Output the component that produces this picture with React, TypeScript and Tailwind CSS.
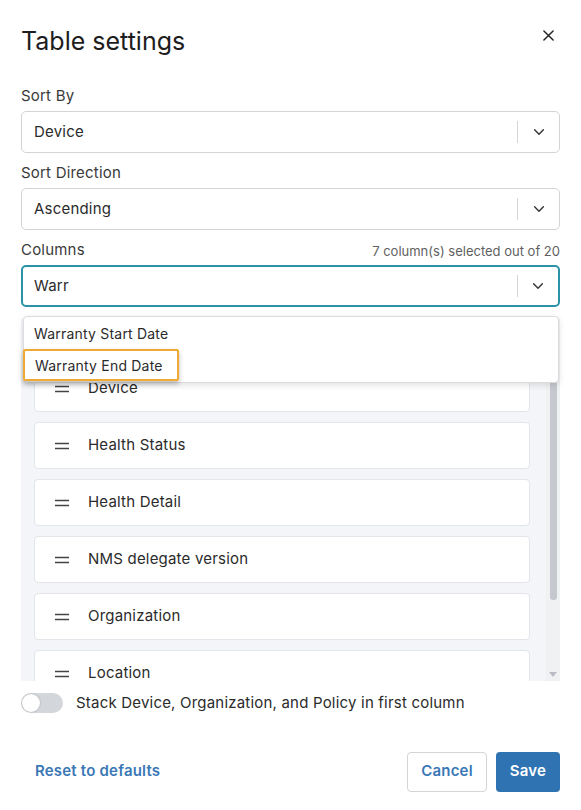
import { useState } from "react";

const columns = [
  "Device",
  "Health Status",
  "Health Detail",
  "NMS delegate version",
  "Organization",
  "Location",
];

function Chevron() {
  return (
    <svg className="w-[14px] h-[14px] text-[#333]" viewBox="0 0 16 16" fill="none" stroke="currentColor">
      <path d="M3 5.5l5 5 5-5" strokeWidth={1.6} strokeLinecap="round" strokeLinejoin="round" />
    </svg>
  );
}

function SelectBox({ value, focused = false }: { value: string; focused?: boolean }) {
  return (
    <div
      className={`flex items-center h-[42px] rounded-[5px] bg-white ${
        focused ? "border-2 border-[#2a93a8]" : "border border-[#d4d4d4]"
      }`}
    >
      <span className={`flex-1 text-[15px] text-[#2b2b2b] ${focused ? "pl-[11px]" : "pl-[12px]"}`}>{value}</span>
      <div className="w-px h-[22px] bg-[#d6d6d6]" />
      <div className={`flex items-center justify-center ${focused ? "w-[40px]" : "w-[41px]"}`}>
        <Chevron />
      </div>
    </div>
  );
}

function DragHandle() {
  return (
    <svg className="w-[14px] h-[8px]" viewBox="0 0 14 8" fill="none" stroke="#444">
      <path d="M0 1.5h14M0 6.5h14" strokeWidth={1.4} />
    </svg>
  );
}

export default function App() {
  const [stacked, setStacked] = useState(false);

  return (
    <div className="w-[581px] h-[810px] bg-white px-[21px] font-['Inter',sans-serif] tracking-[0.2px] text-[#2b2b2b] flex flex-col">
      <div className="flex items-start justify-between pt-[25px]">
        <h1 className="text-[25px] leading-[32px] tracking-normal text-[#1d1d1d]">Table settings</h1>
        <button className="mt-[2px] mr-[4px] w-[16px] h-[16px] flex items-center justify-center text-[#222]">
          <svg className="w-[11px] h-[11px]" viewBox="0 0 12 12" stroke="currentColor" fill="none">
            <path d="M1 1l10 10M11 1L1 11" strokeWidth={1.6} strokeLinecap="round" />
          </svg>
        </button>
      </div>

      <label className="mt-[29px] mb-[5px] text-[15px] leading-[20px] text-[#3a3a3a]">Sort By</label>
      <SelectBox value="Device" />

      <label className="mt-[10px] mb-[5px] text-[15px] leading-[20px] text-[#3a3a3a]">Sort Direction</label>
      <SelectBox value="Ascending" />

      <div className="mt-[10px] mb-[5px] flex items-end justify-between">
        <span className="text-[15px] leading-[20px] text-[#3a3a3a]">Columns</span>
        <span className="text-[13px] leading-[18px] tracking-normal text-[#5f5f5f]">7 column(s) selected out of 20</span>
      </div>

      <div className="relative">
        <SelectBox value="Warr" focused />

        <div className="absolute left-[2px] right-[1px] top-[51px] z-10 bg-white border border-[#dcdcdc] rounded-[4px] shadow-[0_2px_6px_rgba(0,0,0,0.12)] h-[67px]">
          <div className="h-[33px] flex items-center pl-[10px] text-[14px] text-[#2b2b2b]">Warranty Start Date</div>
          <div className="flex">
            <div className="h-[32px] -mt-[1px] -ml-[1px] flex items-center pl-[10px] pr-[14px] border-2 border-[#eeaa32] rounded-[2px] text-[14px] text-[#2b2b2b] shadow-[0_3px_5px_rgba(0,0,0,0.25)]">
              Warranty End Date
            </div>
          </div>
        </div>

        <div className="mt-[12px] h-[362px] bg-[#f3f5f8] flex overflow-hidden">
          <div className="flex-1 pl-[13px] pr-[16px] pt-[46px] flex flex-col gap-[10px]">
            {columns.map((c) => (
              <div
                key={c}
                className="shrink-0 h-[47px] bg-white border border-[#e2e5e9] rounded-[4px] flex items-center pl-[20px]"
              >
                <DragHandle />
                <span className="ml-[19px] text-[15px] text-[#2b2b2b]">{c}</span>
              </div>
            ))}
          </div>
          <div className="w-[14px] bg-[#f0f1f3] flex flex-col items-center pt-[12px] pb-[4px]">
            <div className="w-[7px] h-[269px] rounded-[3px] bg-[#c5c9cf]" />
            <div className="flex-1" />
            <div className="w-0 h-0 border-l-[4px] border-r-[4px] border-t-[5px] border-l-transparent border-r-transparent border-t-[#b9bdc3]" />
          </div>
        </div>
      </div>

      <div className="mt-[11px] flex items-center">
        <button
          onClick={() => setStacked(!stacked)}
          className={`w-[42px] h-[20px] rounded-full flex items-center px-[1px] ${
            stacked ? "bg-[#2f73b3] justify-end" : "bg-[#d3d6da]"
          }`}
        >
          <span className="w-[18px] h-[18px] rounded-full bg-white shadow-[0_0_2px_rgba(0,0,0,0.25)]" />
        </button>
        <span className="ml-[13px] text-[15px] text-[#2b2b2b]">Stack Device, Organization, and Policy in first column</span>
      </div>

      <div className="mt-[37px] flex items-center">
        <button className="px-[14px] text-[15px] font-semibold text-[#3b78b6]">Reset to defaults</button>
        <div className="flex-1" />
        <button className="w-[80px] h-[40px] rounded-[4px] border border-[#d4d4d4] bg-white text-[15px] font-semibold text-[#3b78b6]">
          Cancel
        </button>
        <button className="ml-[9px] w-[64px] h-[40px] rounded-[4px] bg-[#2f73b3] text-[15px] font-semibold text-white">
          Save
        </button>
      </div>
    </div>
  );
}
